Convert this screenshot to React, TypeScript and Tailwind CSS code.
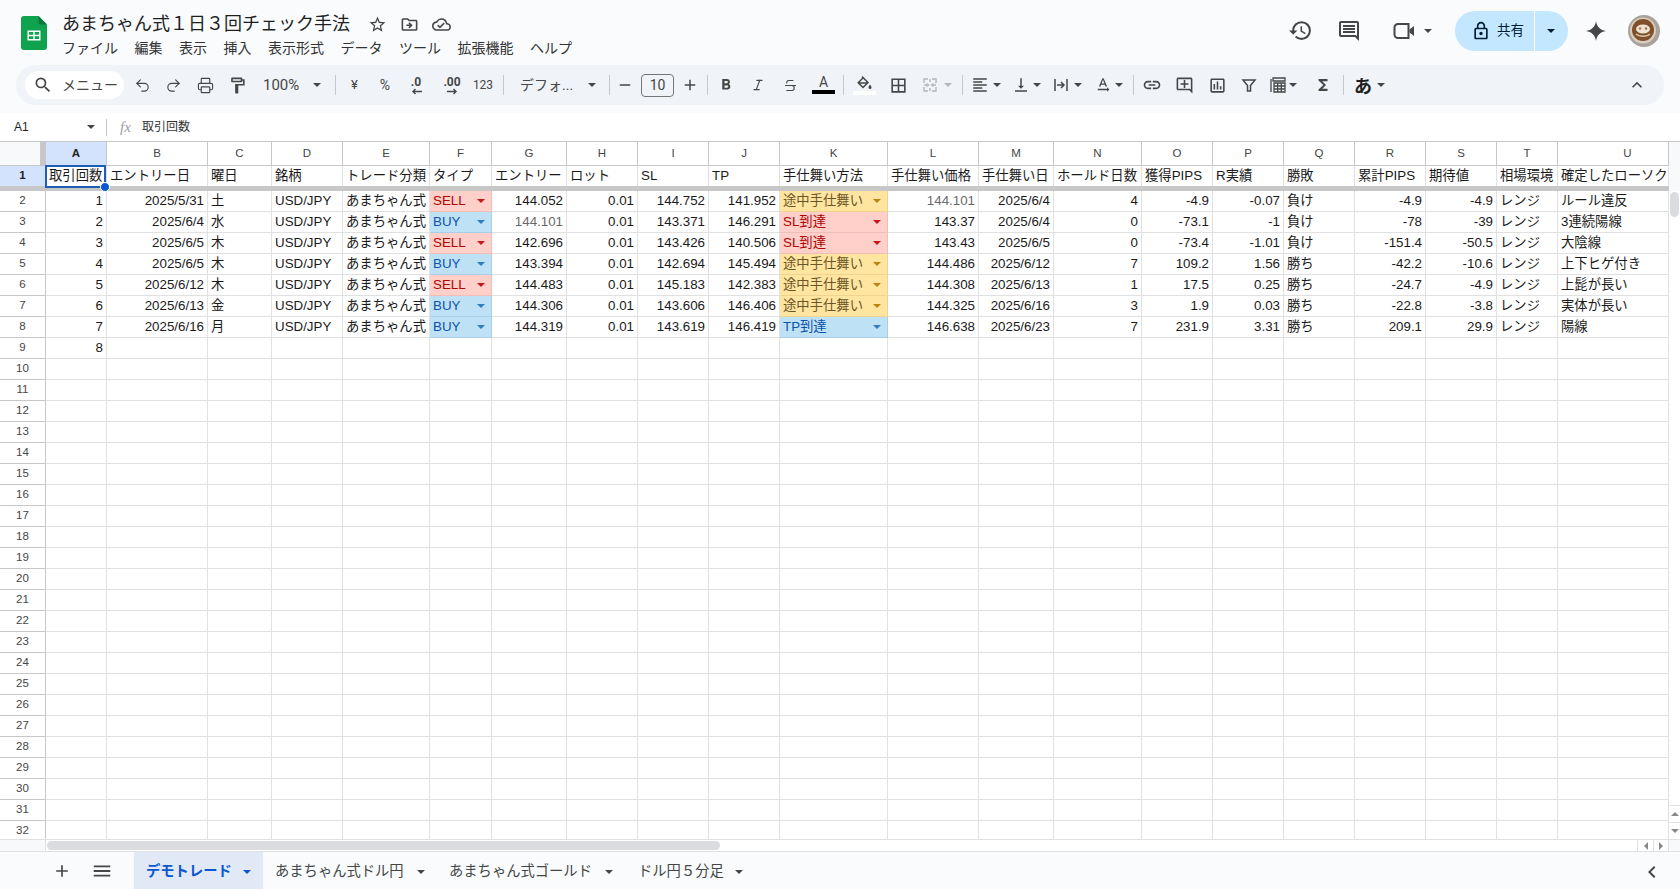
import type { ReactNode } from "react";
import { Italic, Printer, Redo2, Strikethrough, Undo2 } from "lucide-react";
import {
  MdAdd, MdBorderAll, MdChevronLeft, MdFormatAlignLeft, MdFormatBold, MdFunctions, MdHistory,
  MdKeyboardArrowUp, MdLink, MdMenu, MdOutlineAddComment, MdOutlineAssessment, MdOutlineCloudDone, MdOutlineComment,
  MdOutlineDriveFileMove, MdOutlineFormatPaint, MdOutlineLock,
  MdRemove, MdSearch, MdStarBorder, MdTextRotationNone,
  MdVerticalAlignBottom,
} from "react-icons/md";

const COLS =
  "grid grid-cols-[46px_61px_101px_64px_71px_87px_62px_75px_71px_71px_71px_108px_91px_75px_88px_71px_71px_71px_71px_71px_61px_111px]";

const LETTERS = "ABCDEFGHIJKLMNOPQRSTU".split("");
const HEADERS = ["取引回数", "エントリー日", "曜日", "銘柄", "トレード分類", "タイプ", "エントリー", "ロット", "SL", "TP", "手仕舞い方法", "手仕舞い価格", "手仕舞い日", "ホールド日数", "獲得PIPS", "R実績", "勝敗", "累計PIPS", "期待値", "相場環境", "確定したローソク"];

const RIGHT = [0, 1, 6, 7, 8, 9, 11, 12, 13, 14, 15, 17, 18];

const ROWS = [
  ["1", "2025/5/31", "土", "USD/JPY", "あまちゃん式", "SELL", "144.052", "0.01", "144.752", "141.952", "途中手仕舞い", "144.101", "2025/6/4", "4", "-4.9", "-0.07", "負け", "-4.9", "-4.9", "レンジ", "ルール違反"],
  ["2", "2025/6/4", "水", "USD/JPY", "あまちゃん式", "BUY", "144.101", "0.01", "143.371", "146.291", "SL到達", "143.37", "2025/6/4", "0", "-73.1", "-1", "負け", "-78", "-39", "レンジ", "3連続陽線"],
  ["3", "2025/6/5", "木", "USD/JPY", "あまちゃん式", "SELL", "142.696", "0.01", "143.426", "140.506", "SL到達", "143.43", "2025/6/5", "0", "-73.4", "-1.01", "負け", "-151.4", "-50.5", "レンジ", "大陰線"],
  ["4", "2025/6/5", "木", "USD/JPY", "あまちゃん式", "BUY", "143.394", "0.01", "142.694", "145.494", "途中手仕舞い", "144.486", "2025/6/12", "7", "109.2", "1.56", "勝ち", "-42.2", "-10.6", "レンジ", "上下ヒゲ付き"],
  ["5", "2025/6/12", "木", "USD/JPY", "あまちゃん式", "SELL", "144.483", "0.01", "145.183", "142.383", "途中手仕舞い", "144.308", "2025/6/13", "1", "17.5", "0.25", "勝ち", "-24.7", "-4.9", "レンジ", "上髭が長い"],
  ["6", "2025/6/13", "金", "USD/JPY", "あまちゃん式", "BUY", "144.306", "0.01", "143.606", "146.406", "途中手仕舞い", "144.325", "2025/6/16", "3", "1.9", "0.03", "勝ち", "-22.8", "-3.8", "レンジ", "実体が長い"],
  ["7", "2025/6/16", "月", "USD/JPY", "あまちゃん式", "BUY", "144.319", "0.01", "143.619", "146.419", "TP到達", "146.638", "2025/6/23", "7", "231.9", "3.31", "勝ち", "209.1", "29.9", "レンジ", "陽線"],
];

const RED = { box: "bg-[#ffcfc9] border-[#f0bdb7]", text: "text-[#b10202]", caret: "text-[#c9161a]" };
const BLUE = { box: "bg-[#bfe1f6] border-[#a9cfe6]", text: "text-[#0a53a8]", caret: "text-[#2b7fc0]" };
const YELLOW = { box: "bg-[#ffe5a0] border-[#eed48e]", text: "text-[#6b5526]", caret: "text-[#b8860b]" };

const CHIPS: Record<string, typeof RED> = { SELL: RED, BUY: BLUE, "SL到達": RED, "TP到達": BLUE, "途中手仕舞い": YELLOW };

// grey values in the sheet: G3 and L2
const GREY = ["1-6", "0-11"];

const Caret = ({ className = "text-[#444746]" }: { className?: string }) => (
  <svg width="8" height="4" viewBox="0 0 8 4" className={`shrink-0 ${className}`}>
    <path d="M0 0h8L4 4z" fill="currentColor" />
  </svg>
);

const Sep = ({ className }: { className: string }) => <div className={`w-px h-5 bg-[#c7c7c7] shrink-0 ${className}`} />;

const Tb = ({ w, children, className = "" }: { w: string; children: ReactNode; className?: string }) => (
  <div className={`${w} h-7 shrink-0 flex items-center justify-center text-[#444746] ${className}`}>{children}</div>
);

const SheetsLogo = () => (
  <svg width="26" height="34" viewBox="0 0 26 34" className="shrink-0">
    <path d="M3 0h14.500L26 8.500V31a3 3 0 0 1-3 3H3a3 3 0 0 1-3-3V3a3 3 0 0 1 3-3z" fill="#0fa24f" />
    <path d="M17.500 0 26 8.500h-6a2.500 2.500 0 0 1-2.500-2.500z" fill="#0a7a3b" />
    <path d="M6.500 14.500h13v10h-13zM8 16v2.700h4.300V16zm5.700 0v2.700H18V16zM8 20.200V23h4.300v-2.800zm5.700 0V23H18v-2.800z" fill="#fff" fillRule="evenodd" />
  </svg>
);

const Avatar = () => (
  <svg width="32" height="32" viewBox="0 0 32 32" className="shrink-0">
    <circle cx="16" cy="16" r="16" fill="#a8a29a" />
    <circle cx="15" cy="15.500" r="13" fill="#d9cdbd" />
    <circle cx="15" cy="15" r="11" fill="#80502a" />
    <ellipse cx="15" cy="14" rx="7" ry="4.500" fill="#efe4d4" />
    <circle cx="12" cy="13.500" r="1.300" fill="#a87a50" />
    <circle cx="18" cy="13.500" r="1.300" fill="#a87a50" />
    <path d="M8 19c3 3 11 3 14 0" stroke="#d8c4a8" strokeWidth="1.500" fill="none" />
  </svg>
);

const Spark = () => (
  <svg width="24" height="24" viewBox="0 0 24 24">
    <path d="M12 2c.7 5.600 4.400 9.300 10 10-5.600.7-9.300 4.400-10 10-.7-5.600-4.400-9.300-10-10 5.600-.7 9.300-4.400 10-10z" fill="#444746" />
  </svg>
);

const VideoIcon = () => (
  <svg width="22" height="18" viewBox="0 0 22 18">
    <path d="M5 2h10.500v14H5a3.500 3.500 0 0 1-3.500-3.500v-7A3.500 3.500 0 0 1 5 2z" fill="none" stroke="#444746" strokeWidth="2" />
    <path d="M16.500 7.500 21 4v10l-4.500-3.500z" fill="#444746" />
  </svg>
);

const FillIcon = () => (
  <svg width="18" height="16" viewBox="0 0 18 16" fill="none" stroke="#444746" strokeWidth="1.500">
    <path d="M7 1.500 8.500 3M8.200 2.700l4.800 4.800-5 5-4.800-4.800zM3.500 8h9" />
    <path d="M15 9.500c1 1.500 1.500 2.200 1.500 3a1.500 1.500 0 0 1-3 0c0-.8.5-1.500 1.500-3z" fill="#444746" stroke="none" />
  </svg>
);

const MergeIcon = () => (
  <svg width="18" height="18" viewBox="0 0 18 18" fill="none" stroke="#b4b7bb" strokeWidth="1.400">
    <path d="M3 7V3h4M11 3h4v4M15 11v4h-4M7 15H3v-4M9 3v3M9 12v3M3 9h4M11 9h4" />
    <path d="M5.500 7.500 7.500 9l-2 1.500M12.500 7.500 10.500 9l2 1.500" />
  </svg>
);

const WrapIcon = () => (
  <svg width="18" height="18" viewBox="0 0 18 18" fill="none" stroke="#444746" strokeWidth="1.500">
    <path d="M3 3v12M15 3v12M5 9h7M9 6l3 3-3 3" />
  </svg>
);

const FilterIcon = () => (
  <svg width="18" height="18" viewBox="0 0 18 18" fill="none" stroke="#444746" strokeWidth="1.500">
    <path d="M3 4h12l-4.500 5.500V15h-3V9.500z" />
  </svg>
);

const TableViewIcon = () => (
  <svg width="18" height="18" viewBox="0 0 18 18" fill="none" stroke="#444746" strokeWidth="1.300">
    <path d="M2 3v13M4 2h12v3H4zM5 7h11v9H5zM5 10h11M5 13h11M8.700 7v9M12.300 7v9" />
  </svg>
);

const DecimalArrow = ({ left }: { left?: boolean }) => (
  <svg width="11" height="7" viewBox="0 0 11 7" fill="none" stroke="#444746" strokeWidth="1.400">
    {left ? <path d="M11 3.500H2M4.500 1 2 3.500 4.500 6" /> : <path d="M0 3.500h9M6.500 1 9 3.500 6.500 6" />}
  </svg>
);

const Cell = ({ text, col, row }: { text: string; col: number; row: number }) => {
  const chip = CHIPS[text];
  if (chip) {
    return (
      <div className={`h-[21px] border-r border-b flex items-center justify-between pl-[3px] pr-[6px] overflow-hidden ${chip.box}`}>
        <span className={`whitespace-nowrap ${chip.text}`}>{text}</span>
        <Caret className={chip.caret} />
      </div>
    );
  }
  const tone = GREY.includes(`${row}-${col}`) ? "text-[#6a6a6a]" : "text-[#1a1a1a]";
  const align = RIGHT.includes(col) ? "justify-end" : "justify-start";
  return (
    <div className={`h-[21px] border-r border-b border-[#e1e1e1] flex items-center px-[3px] overflow-hidden whitespace-nowrap ${align} ${tone}`}>
      {text}
    </div>
  );
};

const Sheet = () => (
  <div className="flex-1 min-w-0 overflow-hidden text-[13.33px] font-['Liberation_Sans','Noto_Sans_CJK_JP',sans-serif]">
    <div className={`${COLS} h-[25px] border-t border-[#c7c7c7]`}>
      <div className="flex border-r border-b border-[#c7c7c7] bg-[#f8f9fa]">
        <div className="flex-1" />
        <div className="w-[5px] bg-[#c7c7c7]" />
      </div>
      {LETTERS.map((l) => (
        <div
          key={l}
          className={`border-r border-b border-[#c7c7c7] flex items-center justify-center text-[11.5px] ${l === "A" ? "bg-[#d3e3fd] font-bold text-[#1f1f1f]" : "text-[#444746]"} ${l === "U" ? "pl-[29px]" : ""}`}
        >
          {l}
        </div>
      ))}
    </div>
    <div className={`${COLS} h-[20px]`}>
      <div className="border-r border-[#c7c7c7] bg-[#d3e3fd] flex items-center justify-center text-[11.5px] font-bold text-[#1f1f1f]">1</div>
      {HEADERS.map((h, i) => (
        <div key={h} className={`relative border-r border-[#e1e1e1] flex items-center px-[3px] whitespace-nowrap text-[#1a1a1a] ${i === 20 ? "overflow-hidden" : ""}`}>
          {h}
          {i === 0 && (
            <div className="absolute left-[-1px] top-[-1px] right-0 bottom-[-2px] border-2 border-[#1d5fb8] z-10">
              <div className="absolute right-[-6px] bottom-[-6px] w-[10px] h-[10px] rounded-full bg-[#0b57d0] border border-white" />
            </div>
          )}
        </div>
      ))}
    </div>
    <div className="h-[5px] bg-[#c7c7c7]" />
    {Array.from({ length: 31 }, (_, r) => {
      const data = ROWS[r];
      return (
        <div key={r} className={COLS}>
          <div className="h-[21px] border-r border-b border-[#c7c7c7] flex items-center justify-center text-[11.5px] text-[#444746]">{r + 2}</div>
          {LETTERS.map((_l, c) => (
            <Cell key={c} col={c} row={r} text={data ? data[c] : r === 7 && c === 0 ? "8" : ""} />
          ))}
        </div>
      );
    })}
  </div>
);

const App = () => (
  <div className="h-screen w-full flex flex-col overflow-hidden bg-white font-['Roboto','Noto_Sans_CJK_JP',sans-serif]">
    <div className="h-[113px] shrink-0 bg-[#f9fbfd]">
      <div className="h-[65px] flex pl-[21px] pr-[20px]">
        <div className="pt-[16px] shrink-0"><SheetsLogo /></div>
        <div className="ml-[15px] pt-[10px]">
          <div className="flex items-center h-7">
            <span className="text-[18px] leading-7 text-[#1f1f1f]">あまちゃん式１日３回チェック手法</span>
            <div className="flex items-center gap-[13px] ml-[18px] text-[#444746]">
              <MdStarBorder size={19} />
              <MdOutlineDriveFileMove size={19} />
              <MdOutlineCloudDone size={19} />
            </div>
          </div>
          <div className="flex gap-[16.5px] text-[14px] leading-5 text-[#333] whitespace-nowrap">
            {["ファイル", "編集", "表示", "挿入", "表示形式", "データ", "ツール", "拡張機能", "ヘルプ"].map((m) => (
              <span key={m}>{m}</span>
            ))}
          </div>
        </div>
        <div className="ml-auto flex items-center h-[60px] pt-[1px] text-[#444746]">
          <div className="w-8 flex justify-center"><MdHistory size={25} /></div>
          <div className="w-8 ml-[17px] flex justify-center"><MdOutlineComment size={24} /></div>
          <div className="w-[50px] ml-[23px] pl-[5px] flex items-center gap-[9px]"><VideoIcon /><Caret /></div>
          <div className="w-[113px] h-10 ml-[17px] flex rounded-full bg-[#c2e7ff] text-[#001d35]">
            <div className="w-[80px] flex items-center pl-[16px] gap-[6px] border-r border-white">
              <MdOutlineLock size={20} />
              <span className="text-[13.5px]">共有</span>
            </div>
            <div className="flex-1 flex items-center justify-center pr-px"><Caret className="text-[#001d35]" /></div>
          </div>
          <div className="ml-[16px]"><Spark /></div>
          <div className="ml-[20px]"><Avatar /></div>
        </div>
      </div>

      <div className="mx-4 h-10 rounded-full bg-[#f0f4f9] flex items-center text-[13px] text-[#444746]">
        <div className="w-[99px] h-7 ml-[9px] shrink-0 rounded-full bg-white flex items-center pl-[8px] gap-[9px] whitespace-nowrap">
          <MdSearch size={20} />
          <span className="text-[14px]">メニュー</span>
        </div>
        <Tb w="w-[32px] ml-[2px]"><Undo2 size={17} strokeWidth={1.6} /></Tb>
        <Tb w="w-[31px]"><Redo2 size={17} strokeWidth={1.6} /></Tb>
        <Tb w="w-[32px]"><Printer size={17} strokeWidth={1.6} /></Tb>
        <Tb w="w-[32px]"><MdOutlineFormatPaint size={19} /></Tb>
        <Tb w="w-[76px]" className="justify-start! pl-[10px] gap-[14px] text-[15px]"><span>100%</span><Caret /></Tb>
        <Sep className="ml-[6px]" />
        <Tb w="w-[31px] ml-[3px]">¥</Tb>
        <Tb w="w-[30px]" className="text-[14px]">%</Tb>
        <Tb w="w-[32px]" className="flex-col leading-none text-[12px] font-bold">
          <span>.0</span><DecimalArrow left />
        </Tb>
        <Tb w="w-[40px]" className="flex-col leading-none text-[12px] font-bold">
          <span>.00</span><DecimalArrow />
        </Tb>
        <Tb w="w-[22px]" className="text-[12px]">123</Tb>
        <Sep className="ml-[9px]" />
        <Tb w="w-[96px]" className="justify-start! pl-[16px] gap-[15px] text-[14px] whitespace-nowrap"><span>デフォ...</span><Caret /></Tb>
        <Sep className="ml-[9px]" />
        <Tb w="w-[30px]"><MdRemove size={18} /></Tb>
        <div className="w-[33px] h-[23px] ml-px shrink-0 rounded-[4px] border border-[#747775] flex items-center justify-center text-[14px]">10</div>
        <Tb w="w-[32px]"><MdAdd size={18} /></Tb>
        <Sep className="ml-px" />
        <Tb w="w-[36px]"><MdFormatBold size={18} /></Tb>
        <Tb w="w-[28px]"><Italic size={14} strokeWidth={2} /></Tb>
        <Tb w="w-[36px]"><Strikethrough size={15} strokeWidth={1.8} /></Tb>
        <Tb w="w-[31px]" className="flex-col">
          <span className="text-[14px] leading-[15px] mt-[-2px]">A</span>
          <div className="w-[23px] h-[4px] bg-black" />
        </Tb>
        <Sep className="ml-[4px]" />
        <Tb w="w-[40px]" className="flex-col">
          <FillIcon />
          <div className="w-[23px] h-[4px] bg-white" />
        </Tb>
        <Tb w="w-[28px]"><MdBorderAll size={19} /></Tb>
        <Tb w="w-[44px]" className="gap-[5px] justify-start! pl-[9px]"><MergeIcon /><Caret className="text-[#b4b7bb]" /></Tb>
        <Sep className="ml-[6px]" />
        <Tb w="w-[42px]" className="gap-[4px] justify-start! pl-[8px]"><MdFormatAlignLeft size={18} /><Caret /></Tb>
        <Tb w="w-[42px]" className="gap-[3px] justify-start! pl-[7px]"><MdVerticalAlignBottom size={18} /><Caret /></Tb>
        <Tb w="w-[40px]" className="gap-[4px] justify-start! pl-[5px]"><WrapIcon /><Caret /></Tb>
        <Tb w="w-[40px]" className="gap-[3px] justify-start! pl-[7px]"><MdTextRotationNone size={18} /><Caret /></Tb>
        <Sep className="ml-[6px]" />
        <Tb w="w-[36px]"><MdLink size={20} /></Tb>
        <Tb w="w-[29px]"><MdOutlineAddComment size={19} /></Tb>
        <Tb w="w-[36px]"><MdOutlineAssessment size={19} /></Tb>
        <Tb w="w-[28px]"><FilterIcon /></Tb>
        <Tb w="w-[42px]" className="gap-[2px] justify-start! pl-[6px]"><TableViewIcon /><Caret /></Tb>
        <Tb w="w-[36px]"><MdFunctions size={18} /></Tb>
        <Sep className="ml-[2px]" />
        <Tb w="w-[48px]" className="gap-[5px] justify-start! pl-[10px]">
          <span className="text-[18px] font-bold text-[#1f1f1f] pt-[2px]">あ</span><Caret />
        </Tb>
        <Tb w="w-[32px] ml-auto mr-[11px]"><MdKeyboardArrowUp size={20} /></Tb>
      </div>
    </div>

    <div className="h-[28px] shrink-0 flex items-center text-[12px] text-[#1f1f1f] font-['Liberation_Sans','Noto_Sans_CJK_JP',sans-serif]">
      <span className="w-[87px] pl-[14px]">A1</span>
      <Caret />
      <div className="w-px h-[17px] bg-[#c7c7c7] ml-[11px]" />
      <span className="ml-[13px] w-[22px] text-[#9aa0a6] italic font-['Liberation_Serif',serif] text-[15px]">fx</span>
      <span className="text-[#333]">取引回数</span>
    </div>

    <div className="flex-1 min-h-0 flex">
      <Sheet />
      <div className="w-[11px] shrink-0 flex flex-col">
        <div className="h-[50px] border-t border-[#c7c7c7] bg-[#f8f9fa]" />
        <div className="w-[9px] h-[25px] mt-px ml-px rounded-full bg-[#dadce0]" />
        <div className="mt-auto h-[17px] border-t border-[#e1e1e1] flex items-center justify-center"><Caret className="text-[#888] rotate-180" /></div>
        <div className="h-[17px] border-t border-[#e1e1e1] flex items-center justify-center"><Caret className="text-[#888]" /></div>
      </div>
    </div>

    <div className="h-[13px] shrink-0 flex items-stretch border-t border-b border-[#e1e1e1]">
      <div className="w-[46px] border-r border-[#e1e1e1] bg-[#f8f9fa]" />
      <div className="flex-1 flex items-center pl-px">
        <div className="w-[673px] h-[9px] rounded-full bg-[#dadce0]" />
      </div>
      <div className="w-[16px] border-l border-[#e1e1e1] flex items-center justify-center"><Caret className="text-[#888] rotate-90" /></div>
      <div className="w-[15px] border-l border-[#e1e1e1] flex items-center justify-center"><Caret className="text-[#888] -rotate-90" /></div>
      <div className="w-[12px] border-l border-[#e1e1e1] bg-[#f8f9fa]" />
    </div>

    <div className="h-[37px] shrink-0 bg-[#f9fbfd] flex items-stretch text-[14.3px] text-[#444746] whitespace-nowrap">
      <div className="w-8 ml-[46px] pt-[1px] flex items-center justify-center"><MdAdd size={20} /></div>
      <div className="w-8 ml-[8px] pt-[1px] flex items-center justify-center"><MdMenu size={22} /></div>
      <div className="w-[129px] ml-[16px] pl-[12px] pt-[2px] flex items-center gap-[11px] bg-[#e1e9f7] text-[#0b57d0] font-bold">
        <span>デモトレード</span><Caret className="text-[#0b57d0]" />
      </div>
      <div className="w-[174px] pl-[12px] pt-[2px] flex items-center gap-[13px]"><span>あまちゃん式ドル円</span><Caret /></div>
      <div className="w-[189px] pl-[12px] pt-[2px] flex items-center gap-[13px]"><span>あまちゃん式ゴールド</span><Caret /></div>
      <div className="pl-[12px] pt-[2px] flex items-center gap-[11px]"><span>ドル円５分足</span><Caret /></div>
      <div className="ml-auto mr-[16px] pt-[2px] flex items-center"><MdChevronLeft size={24} /></div>
    </div>
  </div>
);

export default App;
